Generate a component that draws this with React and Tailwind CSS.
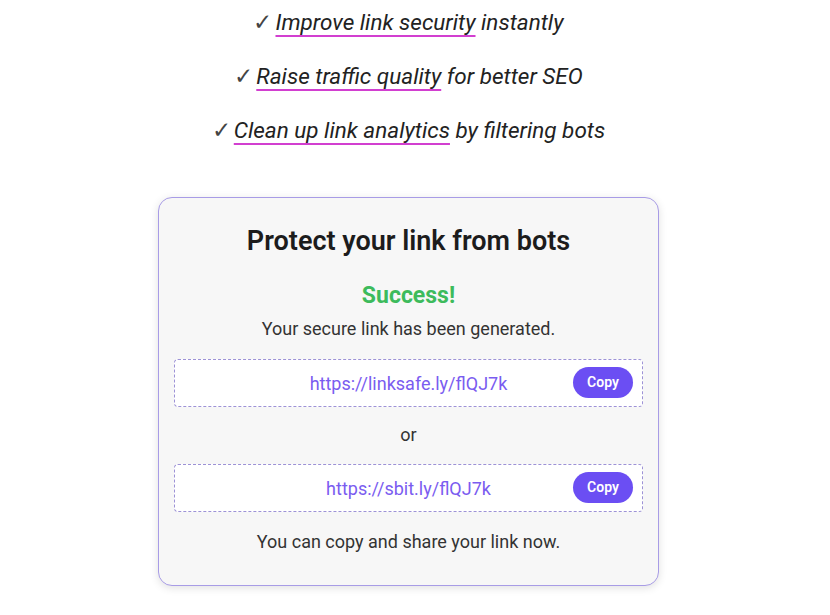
import React from 'react';

const Bullet = ({ mark, rest }) => (
  <p className="text-[22.5px] leading-[28px] italic text-[#222]">
    <span className="not-italic mr-[3px] text-[#444]">✓</span>
    <span className="underline decoration-[#d23fd0] decoration-2 underline-offset-[5px]">{mark}</span>
    {rest}
  </p>
);

const LinkBox = ({ url }) => (
  <div className="relative h-[48px] bg-white border border-dashed border-[#9d92d6] rounded-[4px] flex items-center justify-center">
    <span className="text-[18px] text-[#7a5cf0]">{url}</span>
    <button className="absolute right-[9px] top-[7px] w-[60px] h-[31px] rounded-full bg-[#6b4ef3] text-white text-[14px] font-semibold">
      Copy
    </button>
  </div>
);

export default function App() {
  const font = { fontFamily: 'Roboto, "Noto Sans", sans-serif' };
  return (
    <div className="w-[817px] bg-white min-h-[615px] pt-[8px] flex flex-col items-center" style={font}>
      <div className="flex flex-col items-center gap-[26px]">
        <Bullet mark="Improve link security" rest=" instantly" />
        <Bullet mark="Raise traffic quality" rest=" for better SEO" />
        <Bullet mark="Clean up link analytics" rest=" by filtering bots" />
      </div>

      <div className="mt-[53px] w-[501px] bg-[#f7f7f7] border border-[#a89ce6] rounded-[14px] shadow-[0_2px_8px_rgba(0,0,0,0.12)] px-[15px] pt-[27px] pb-[31px] flex flex-col text-center">
        <h1 className="text-[27px] leading-[32px] font-semibold text-[#1c1c1c]">Protect your link from bots</h1>
        <p className="mt-[25px] text-[23px] leading-[28px] font-bold text-[#3dbb5c]">Success!</p>
        <p className="mt-[7px] text-[18px] leading-[24px] text-[#333]">Your secure link has been generated.</p>
        <div className="mt-[18px]">
          <LinkBox url="https://linksafe.ly/flQJ7k" />
        </div>
        <p className="mt-[16px] text-[18px] leading-[24px] text-[#333]">or</p>
        <div className="mt-[17px]">
          <LinkBox url="https://sbit.ly/flQJ7k" />
        </div>
        <p className="mt-[18px] text-[18px] leading-[24px] text-[#333]">You can copy and share your link now.</p>
      </div>
    </div>
  );
}
